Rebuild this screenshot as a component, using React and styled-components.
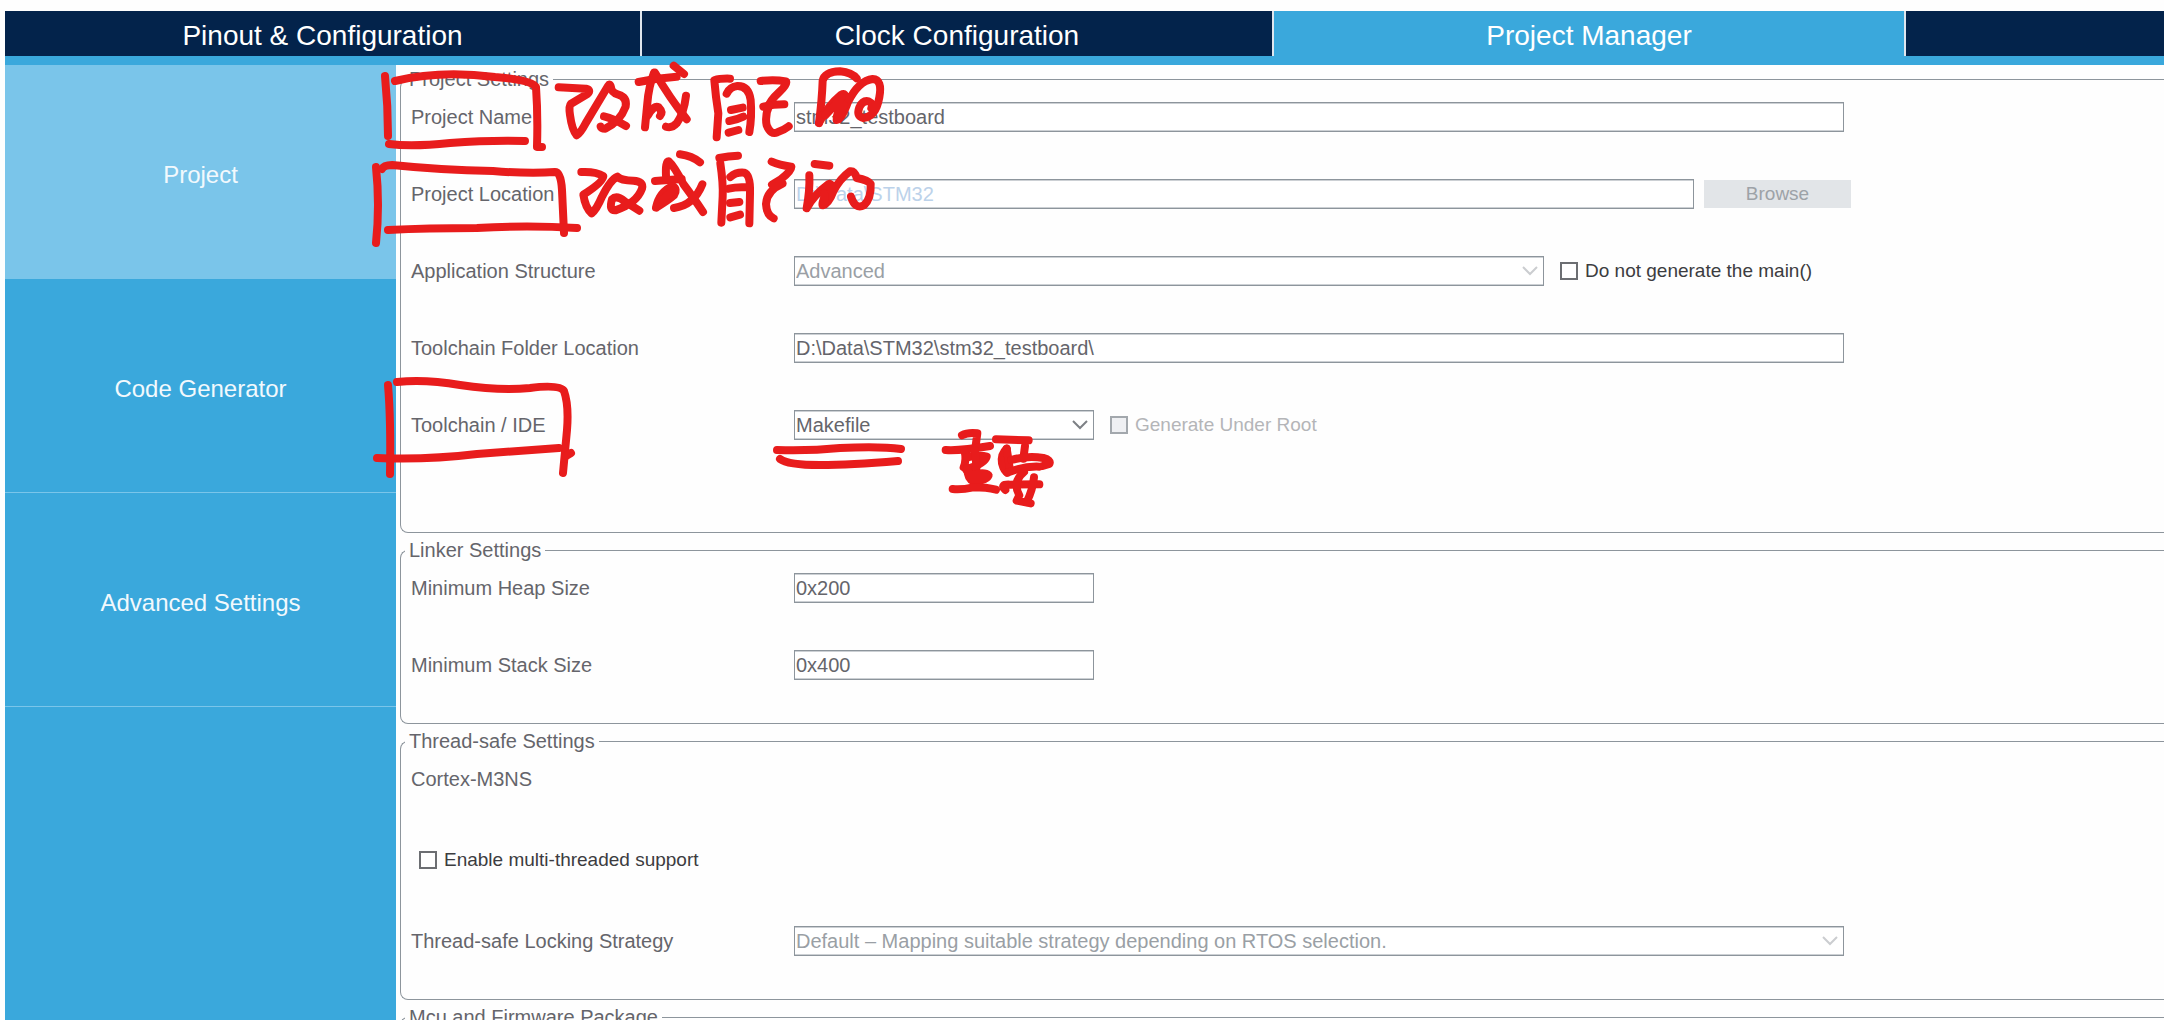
import React from "react";
import styled, { createGlobalStyle } from "styled-components";

const color = {
  navy: "#03234b",
  blue: "#3aa8dc",
  sky: "#7ac5ea",
  line: "#8d959c",
  softLine: "#ccd0d4",
  label: "#65656b",
  strong: "#3c3c40",
  muted: "#9a9fa5",
  faint: "#b4b5b8",
  locked: "#bcd2ea",
  ink: "#e81c1c",
};

const GlobalStyle = createGlobalStyle`
  *, *::before, *::after { box-sizing: border-box; }
  body {
    margin: 0;
    background: #fefefe;
    font-family: "Liberation Sans", Arial, sans-serif;
    font-size: 20px;
    line-height: 22px;
    color: ${color.label};
  }
  button, input, select { font: inherit; color: inherit; margin: 0; }
`;

const Shell = styled.div`
  position: relative;
  display: flex;
  flex-direction: column;
  height: 100vh;
  overflow: hidden;
  padding: 11px 0 0 5px;
`;

const TabBar = styled.nav`
  flex: none;
  display: grid;
  grid-template-columns: 637fr 632fr 632fr 258fr;
  border-bottom: 9px solid ${color.blue};
`;

const Tab = styled.button`
  height: 45px;
  padding: 4px 0 0;
  border: 0;
  border-right: 2px solid ${(p) => (p.$last ? color.navy : "#dfe6ee")};
  background: ${(p) => (p.$active ? color.blue : color.navy)};
  color: #fff;
  font-size: 28px;
  line-height: 32px;
`;

const Body = styled.div`
  flex: 1;
  min-height: 0;
  display: flex;
`;

const Sidebar = styled.nav`
  flex: none;
  width: 391px;
  display: flex;
  flex-direction: column;
  background: ${color.blue};
`;

const SideItem = styled.button`
  flex: none;
  height: 214px;
  padding: 6px 0 0;
  border: 0;
  border-bottom: 1px solid ${color.sky};
  background: ${(p) => (p.$active ? color.sky : "transparent")};
  color: #f2f9fd;
  font-size: 24px;
  line-height: 28px;
`;

const Panel = styled.main`
  flex: 1;
  min-width: 0;
  overflow: hidden;
  display: flex;
  flex-direction: column;
  gap: 6px;
  padding: 3px 0 0 4px;
`;

const Group = styled.fieldset`
  flex: none;
  min-width: 0;
  margin: 0;
  padding: 12px 0 ${(p) => (p.$tall ? 92 : 43)}px 10px;
  border: 1px solid ${color.line};
  border-right: 0;
  border-radius: 8px 0 0 8px;
`;

const Legend = styled.legend`
  margin-left: -6px;
  padding: 0 4px;
`;

const Rows = styled.div`
  display: flex;
  flex-direction: column;
  gap: ${(p) => (p.$loose ? 51 : 47)}px;
`;

const Row = styled.div`
  display: flex;
  align-items: center;
  height: 30px;
`;

const Label = styled.label`
  flex: 0 0 383px;
`;

const Plain = styled.span``;

const Field = styled.input`
  flex: 0 1 ${(p) => p.$width}px;
  width: ${(p) => p.$width}px;
  min-width: 0;
  height: 30px;
  padding: 0 1px;
  border: 1px solid ${color.line};
  border-radius: 0;
  outline: 0;
  background: #fff;
  box-shadow: inset 0 1px ${color.softLine}, inset 0 -1px ${color.softLine};
  color: ${(p) => (p.disabled ? color.locked : color.label)};
`;

const SelectBox = styled.div`
  position: relative;
  flex: 0 1 ${(p) => p.$width}px;
  min-width: 0;
  height: 30px;

  svg {
    position: absolute;
    top: 10px;
    right: 6px;
    pointer-events: none;
  }
`;

const Select = styled.select`
  appearance: none;
  width: 100%;
  height: 30px;
  padding: 0 24px 0 1px;
  border: 1px solid ${color.line};
  border-radius: 0;
  outline: 0;
  background: #fff;
  box-shadow: inset 0 1px ${color.softLine}, inset 0 -1px ${color.softLine};
  opacity: 1;
  color: ${(p) => (p.disabled ? color.muted : color.label)};
`;

const Browse = styled.button`
  flex: none;
  width: 147px;
  height: 28px;
  margin-left: 10px;
  padding: 0;
  border: 0;
  background: #e2e5e8;
  color: #9da2a7;
  font-size: 19px;
`;

const Check = styled.label`
  flex: none;
  display: flex;
  align-items: center;
  gap: 7px;
  margin-left: ${(p) => (p.$lead ? 8 : 16)}px;
  color: ${(p) => (p.$disabled ? color.faint : color.strong)};
  font-size: 19px;
`;

const Box = styled.input`
  appearance: none;
  width: 18px;
  height: 18px;
  border: 2px solid #6c6e72;
  background: #fff;

  &:disabled {
    border-color: #a3a8ad;
    background: #eff0f3;
  }
`;

const Ink = styled.svg`
  position: absolute;
  top: 0;
  left: 0;
  width: 2164px;
  height: 1020px;
  pointer-events: none;
  fill: none;
  stroke: ${color.ink};
  stroke-linecap: round;
  stroke-linejoin: round;
`;

function Dropdown({ id, width, disabled, value }) {
  return (
    <SelectBox $width={width}>
      <Select id={id} disabled={disabled} defaultValue={value}>
        <option>{value}</option>
      </Select>
      <svg width="16" height="10" viewBox="0 0 16 10" aria-hidden="true">
        <path
          d="M1 1 L8 8 L15 1"
          fill="none"
          stroke={disabled ? "#cbcdd0" : "#7d8085"}
          strokeWidth="2"
        />
      </svg>
    </SelectBox>
  );
}

function Tick({ lead, disabled, children }) {
  return (
    <Check $lead={lead} $disabled={disabled}>
      <Box type="checkbox" disabled={disabled} />
      {children}
    </Check>
  );
}

const frames = [
  "M385 76 Q388 106 388 136",
  "M395 81 Q440 70 495 77 Q531 80 536 87 Q538 115 537 147 L542 147",
  "M389 144 Q412 147 450 143 Q490 140 525 141",
  "M376 167 Q380 205 376 243",
  "M382 169 Q384 165 392 165 Q440 170 493 171 Q530 174 555 172 Q561 172 562 190 L564 233",
  "M388 230 Q427 228 477 228 Q527 225 577 228",
  "M388 385 Q391 420 390 474",
  "M397 382 Q425 379 460 385 Q500 391 530 388 Q560 384 564 391 Q569 405 567 430 L563 473",
  "M377 458 Q427 460 477 454 L559 448",
  "M566 456 L571 453",
  "M777 450 Q810 451 840 448 Q880 446 901 449",
  "M780 459 Q788 465 820 465 Q850 465 898 461",
];

/* Handwritten notes, one list of pen strokes for each cluster. */
const notes = [
  {
    at: "translate(540 50)",
    label: "改成",
    strokes: [
      "M56 112 L138 116 Q155 120 142 132 L92 162 Q86 168 90 195 Q96 240 110 256 Q120 252 138 218 L204 108 Q210 98 213 112 Q214 128 235 134 Q262 142 257 170 Q240 215 196 236 Q184 236 182 230",
      "M192 199 Q222 206 258 228",
      "M296 96 Q350 84 410 80",
      "M401 47 L432 72",
      "M342 68 Q326 110 322 160 L315 232",
      "M324 196 Q342 164 356 172 Q370 186 360 198",
      "M345 68 Q390 145 440 208",
      "M438 137 Q432 190 410 220 Q395 236 378 230",
    ],
  },
  {
    at: "translate(700 50)",
    label: "自己的",
    strokes: [
      "M90 86 Q60 85 43 91 Q47 140 55 190 L50 262",
      "M80 131 Q90 110 112 108 Q146 107 152 150 Q156 200 148 246",
      "M93 180 L128 173",
      "M88 213 Q112 209 130 200",
      "M86 248 L115 240",
      "M182 93 Q222 88 258 94 Q264 102 238 126 Q210 152 206 168",
      "M190 170 Q220 163 253 163",
      "M208 166 Q194 195 200 226 Q212 256 232 247 Q252 240 266 229",
      "M357 219 Q366 150 368 92 Q374 66 420 64 Q455 68 470 85",
      "M357 219 Q384 166 422 135 Q440 126 433 148 Q408 190 410 210 Q424 212 444 156 Q476 92 518 87 Q548 88 538 142 Q528 200 490 204 Q468 200 478 172 Q488 150 506 154 Q520 160 514 174",
      "M376 196 L424 144 M420 160 L414 200 M432 166 L416 206",
    ],
  },
  {
    at: "translate(540 50)",
    label: "改成",
    strokes: [
      "M124 366 Q168 364 190 378 Q190 396 130 434 Q136 474 155 490 Q170 478 186 440 Q212 388 232 380 Q244 392 280 392 Q312 394 306 416 Q290 460 226 481 Q206 482 216 448 Q230 434 254 454 L298 482",
      "M420 313 Q456 318 480 337",
      "M378 378 Q376 334 386 334 Q402 348 430 402 Q464 448 489 486",
      "M345 393 L425 387",
      "M348 473 Q358 426 398 408 Q414 418 402 436 Q386 450 350 472",
      "M366 448 L400 422",
      "M487 403 Q462 466 402 474",
    ],
  },
  {
    at: "translate(700 50)",
    label: "自己的",
    strokes: [
      "M58 324 Q85 318 114 317",
      "M61 340 Q70 400 68 440 L64 518",
      "M91 381 Q108 366 132 368 Q152 374 150 430 L148 520",
      "M86 416 Q110 410 140 412",
      "M90 459 L118 456",
      "M91 502 L120 494",
      "M215 335 Q238 346 274 350 Q276 362 242 388 L216 404 L248 401 Q200 422 198 462 Q200 496 221 505",
      "M344 342 L388 347",
      "M328 376 Q330 420 320 475 Q340 436 386 402 Q398 398 388 420 Q362 456 368 466 Q386 462 400 424 Q420 386 450 364 Q464 362 470 384 Q504 390 512 402 Q514 446 492 466 Q466 480 453 440",
      "M372 430 L374 460",
    ],
  },
  {
    at: "translate(760 380)",
    label: "重要",
    strokes: [
      "M606 166 Q622 157 652 160 L646 205",
      "M557 210 Q600 213 690 198",
      "M614 214 Q620 240 611 262",
      "M622 232 Q660 224 680 230 Q674 252 618 268",
      "M644 210 Q652 260 648 306",
      "M622 264 Q622 296 640 304 Q680 302 686 286 Q674 274 640 284",
      "M578 327 Q604 330 640 322 Q680 322 708 329",
      "M708 178 L806 181",
      "M740 206 Q722 222 726 250 Q732 274 742 278",
      "M740 206 Q746 240 750 272",
      "M795 198 L790 236",
      "M754 240 Q802 226 850 234 Q874 240 868 252 L848 258",
      "M742 278 Q790 258 838 260",
      "M736 330 Q718 312 750 314 L838 313",
      "M822 292 Q818 330 800 366",
      "M792 276 Q756 306 778 346 L770 362 L812 370",
    ],
  },
];

const tabs = ["Pinout & Configuration", "Clock Configuration", "Project Manager", ""];
const sections = ["Project", "Code Generator", "Advanced Settings"];

export default function App() {
  return (
    <Shell>
      <GlobalStyle />
      <TabBar>
        {tabs.map((name, i) => (
          <Tab key={i} type="button" $active={i === 2} $last={i === 3}>
            {name}
          </Tab>
        ))}
      </TabBar>
      <Body>
        <Sidebar>
          {sections.map((name, i) => (
            <SideItem key={name} type="button" $active={i === 0}>
              {name}
            </SideItem>
          ))}
        </Sidebar>
        <Panel>
          <Group $tall>
            <Legend>Project Settings</Legend>
            <Rows>
              <Row>
                <Label htmlFor="name">Project Name</Label>
                <Field id="name" $width={1050} defaultValue="stm32_testboard" />
              </Row>
              <Row>
                <Label htmlFor="location">Project Location</Label>
                <Field id="location" $width={900} disabled defaultValue="D:\Data\STM32" />
                <Browse type="button" disabled>
                  Browse
                </Browse>
              </Row>
              <Row>
                <Label htmlFor="structure">Application Structure</Label>
                <Dropdown id="structure" width={750} disabled value="Advanced" />
                <Tick>Do not generate the main()</Tick>
              </Row>
              <Row>
                <Label htmlFor="folder">Toolchain Folder Location</Label>
                <Field id="folder" $width={1050} defaultValue="D:\Data\STM32\stm32_testboard\" />
              </Row>
              <Row>
                <Label htmlFor="ide">Toolchain / IDE</Label>
                <Dropdown id="ide" width={300} value="Makefile" />
                <Tick disabled>Generate Under Root</Tick>
              </Row>
            </Rows>
          </Group>
          <Group>
            <Legend>Linker Settings</Legend>
            <Rows>
              <Row>
                <Label htmlFor="heap">Minimum Heap Size</Label>
                <Field id="heap" $width={300} defaultValue="0x200" />
              </Row>
              <Row>
                <Label htmlFor="stack">Minimum Stack Size</Label>
                <Field id="stack" $width={300} defaultValue="0x400" />
              </Row>
            </Rows>
          </Group>
          <Group>
            <Legend>Thread-safe Settings</Legend>
            <Rows $loose>
              <Row>
                <Plain>Cortex-M3NS</Plain>
              </Row>
              <Row>
                <Tick lead>Enable multi-threaded support</Tick>
              </Row>
              <Row>
                <Label htmlFor="strategy">Thread-safe Locking Strategy</Label>
                <Dropdown
                  id="strategy"
                  width={1050}
                  disabled
                  value="Default – Mapping suitable strategy depending on RTOS selection."
                />
              </Row>
            </Rows>
          </Group>
          <Group>
            <Legend>Mcu and Firmware Package</Legend>
          </Group>
        </Panel>
      </Body>
      <Ink viewBox="0 0 2164 1020">
        <g strokeWidth="8">
          {frames.map((d) => (
            <path key={d} d={d} />
          ))}
        </g>
        {notes.map((note, i) => (
          <g
            key={i}
            role="img"
            aria-label={note.label}
            transform={`${note.at} scale(${1 / 3})`}
            strokeWidth="24"
          >
            {note.strokes.map((d) => (
              <path key={d} d={d} />
            ))}
          </g>
        ))}
      </Ink>
    </Shell>
  );
}
